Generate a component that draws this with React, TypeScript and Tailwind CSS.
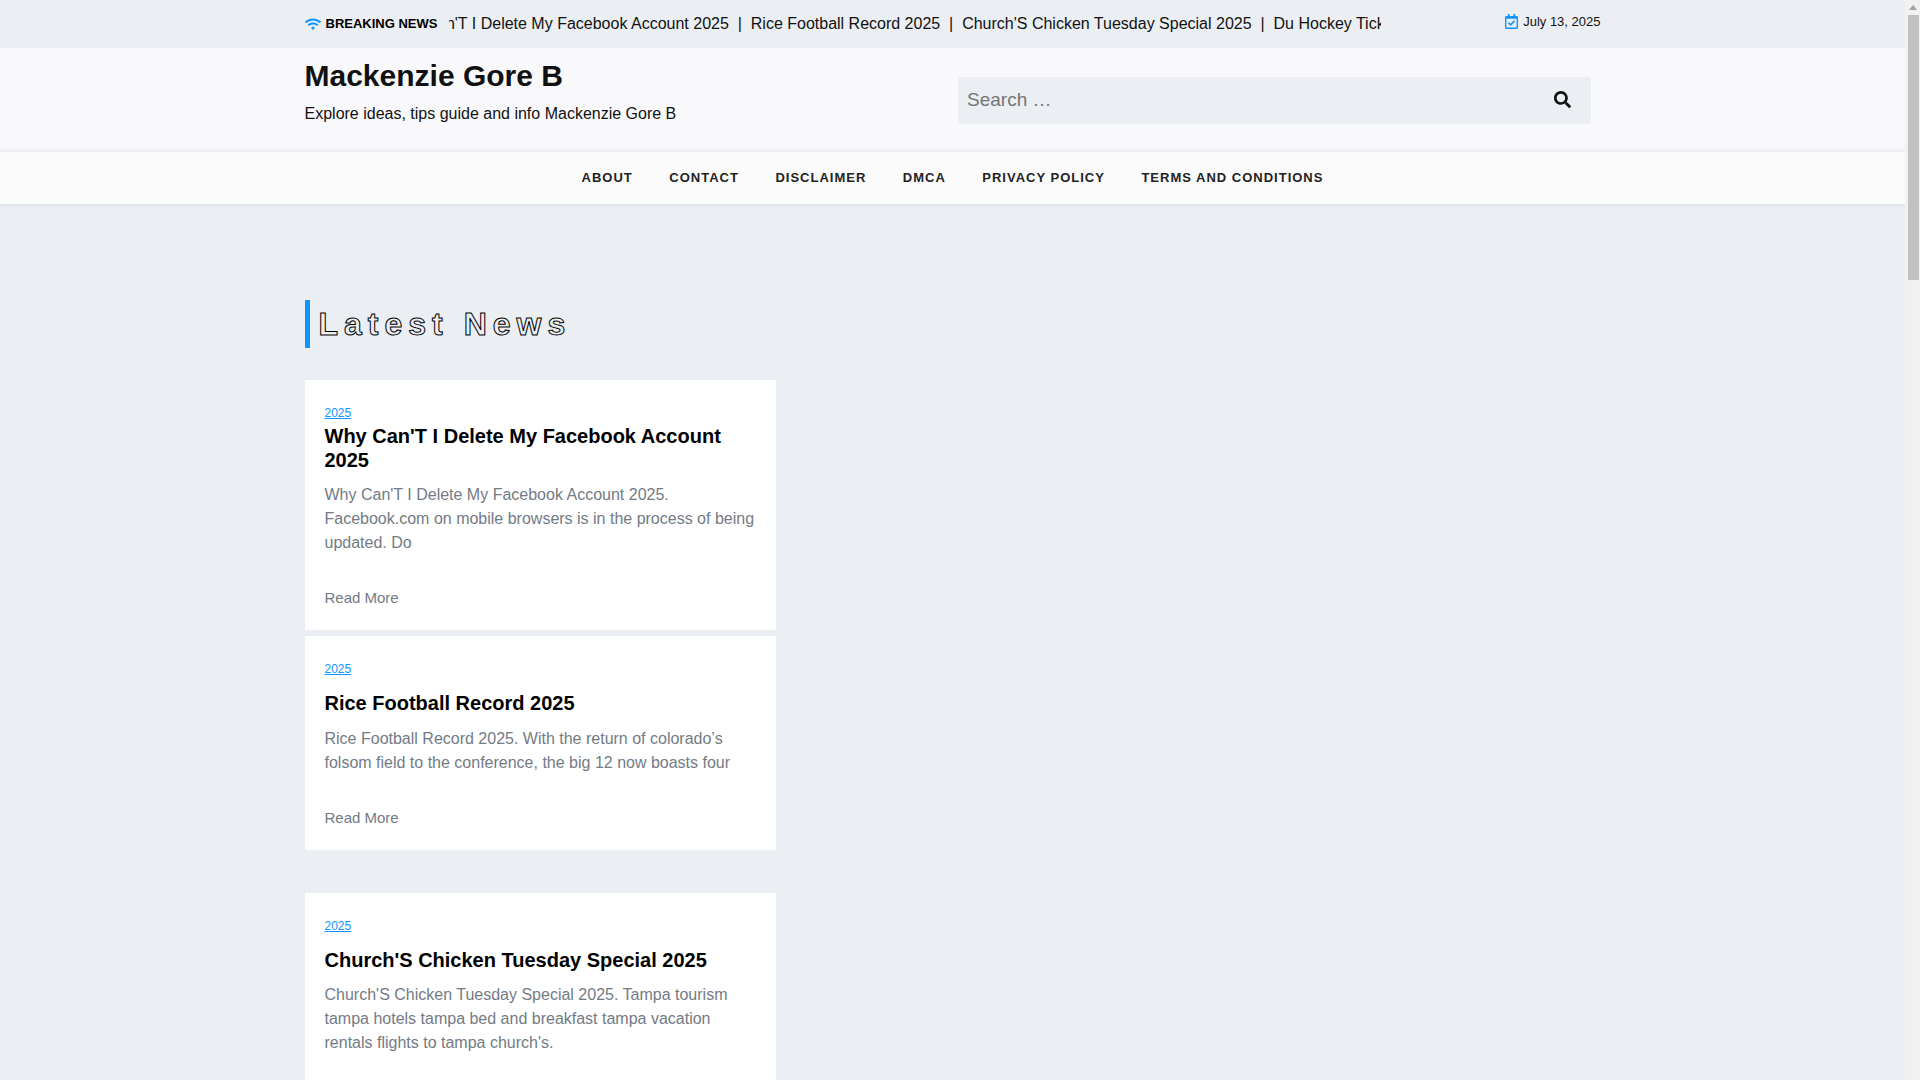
import { FaWifi, FaRegCalendarCheck, FaSearch } from "react-icons/fa";

const ticker = [
  "Why Can'T I Delete My Facebook Account 2025",
  "Rice Football Record 2025",
  "Church'S Chicken Tuesday Special 2025",
  "Du Hockey Tickets 2025",
];
const nav = ["About", "Contact", "Disclaimer", "DMCA", "Privacy Policy", "Terms and Conditions"];

function Card({ outer, titleGap, textGap, title, text }: { outer: string; titleGap: string; textGap: string; title: string; text: string }) {
  return (
    <article className={`w-[471.5px] bg-white px-5 pt-6 pb-[21px] ${outer}`}>
      <a href="#" className="block h-[18px] text-xs leading-[18px] text-[#1094ff] underline">2025</a>
      <h2 className={`text-xl leading-6 font-bold text-black ${titleGap}`}>{title}</h2>
      <p className={`text-base leading-6 text-[#737b85] ${textGap}`}>{text}</p>
      <a href="#" className="mt-8 block text-[15px] leading-[22px] text-[#737b85]">Read More</a>
    </article>
  );
}

export default function App() {
  return (
    <div className="min-h-[4280px] bg-[#ebeff3] pr-[15px] font-['Liberation_Sans',Arial,sans-serif] text-[#111]">
      <div className="fixed top-0 right-0 bottom-0 flex w-[15px] flex-col items-center bg-[#f1f1f1]">
        <div className="flex h-[15px] w-full items-center justify-center">
          <div className="h-0 w-0 border-x-[4px] border-b-[5px] border-x-transparent border-b-[#a3a3a3]" />
        </div>
        <div className="ml-px h-[265px] w-[11px] bg-[#c1c1c1]" />
      </div>

      <div className="h-12 bg-[#ebeff3]">
        <div className="mx-auto flex h-12 w-[1320px] items-center px-3">
          <div className="flex w-[144.5px] shrink-0 items-center gap-[5px]">
            <FaWifi className="h-4 w-4 text-[#1094ff]" />
            <span className="text-[13px] font-bold text-black">BREAKING NEWS</span>
          </div>
          <div className="w-[932px] shrink-0 overflow-hidden whitespace-nowrap text-base text-[#111]">
            <div className="ml-[-60px]">
              {ticker.map((t, i) => (
                <span key={t}>
                  {i > 0 && <span>{"\u00a0\u00a0|\u00a0\u00a0"}</span>}
                  {t}
                </span>
              ))}
            </div>
          </div>
          <div className="mb-[5px] ml-auto flex items-center gap-[5px]">
            <FaRegCalendarCheck className="h-[15px] w-[13px] text-[#1094ff]" />
            <span className="text-[13px] text-[#111]">July 13, 2025</span>
          </div>
        </div>
      </div>

      <header className="h-[104px] bg-[#f9f9fc]">
        <div className="mx-auto flex w-[1320px] items-start justify-between px-3">
          <div className="pt-2.5">
            <h1 className="text-[30px] leading-9 font-bold text-[#111]">Mackenzie Gore B</h1>
            <p className="mt-2 text-base leading-6 text-[#111]">Explore ideas, tips guide and info Mackenzie Gore B</p>
          </div>
          <form className="mt-[29px] mr-[9.5px] flex h-[47px] w-[633px] items-center rounded bg-[#ebeff3]">
            <input placeholder="Search …" className="h-full min-w-0 flex-1 bg-transparent pb-0.5 pl-[9px] text-[19px] text-[#111] outline-none placeholder:text-[#757575]" />
            <FaSearch className="mr-5 mb-0.5 h-[17px] w-[17px] text-[#111]" />
          </form>
        </div>
      </header>

      <nav className="flex h-[52px] items-center justify-center gap-[36.5px] bg-[#fbfbfc] shadow-[0_0_5px_rgba(0,0,0,0.12)]">
        {nav.map((n) => (
          <a key={n} href="#" className="text-[13px] font-bold tracking-[1px] text-[#222] uppercase">{n}</a>
        ))}
      </nav>

      <main className="mx-auto w-[1320px] px-3 pt-24">
        <h2 className="flex h-12 items-center border-l-[5px] border-[#1094ff] pl-[9px] text-[32px] font-bold tracking-[6px] text-transparent [-webkit-text-stroke:1px_#000]">
          Latest News
        </h2>
        <div className="mt-8">
          <Card
            outer=""
            titleGap="mt-0.5"
            textGap="mt-[11px]"
            title="Why Can'T I Delete My Facebook Account 2025"
            text="Why Can'T I Delete My Facebook Account 2025. Facebook.com on mobile browsers is in the process of being updated. Do"
          />
          <Card
            outer="mt-1.5"
            titleGap="mt-[13px]"
            textGap="mt-3"
            title="Rice Football Record 2025"
            text="Rice Football Record 2025. With the return of colorado’s folsom field to the conference, the big 12 now boasts four"
          />
          <Card
            outer="mt-[43px]"
            titleGap="mt-[13px]"
            textGap="mt-[11px]"
            title="Church'S Chicken Tuesday Special 2025"
            text="Church'S Chicken Tuesday Special 2025. Tampa tourism tampa hotels tampa bed and breakfast tampa vacation rentals flights to tampa church's."
          />
        </div>
      </main>
    </div>
  );
}
